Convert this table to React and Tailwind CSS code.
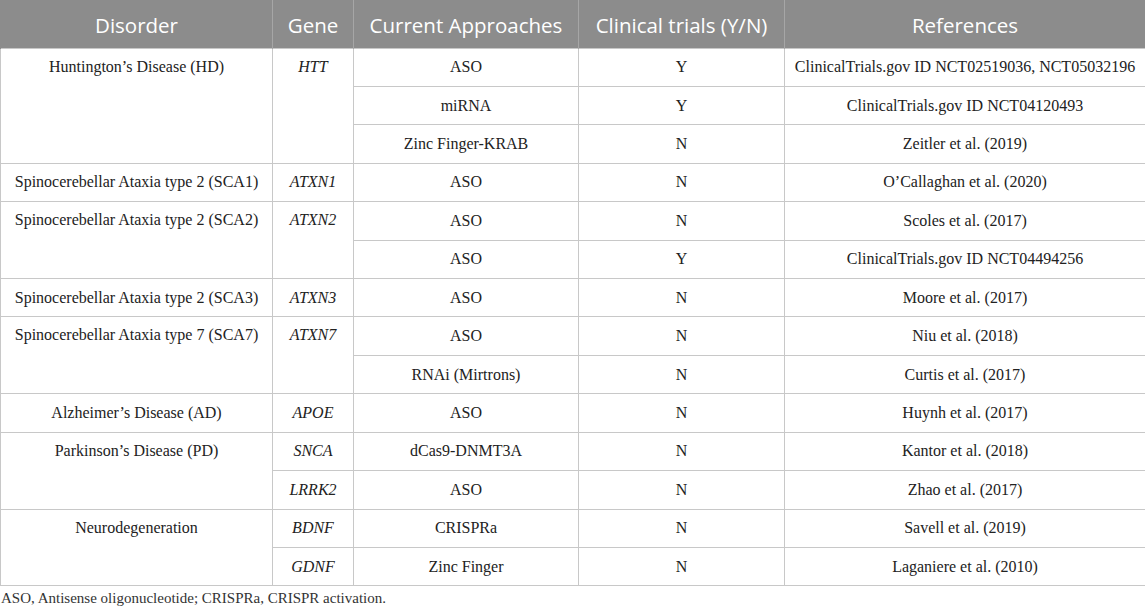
import React from "react";

const serif = { fontFamily: '"Liberation Serif", "Times New Roman", serif' };

const rows = [
  { d: ["Huntington’s Disease (HD)", 3], g: ["HTT", 3], a: "ASO", c: "Y", r: "ClinicalTrials.gov ID NCT02519036, NCT05032196" },
  { a: "miRNA", c: "Y", r: "ClinicalTrials.gov ID NCT04120493" },
  { a: "Zinc Finger-KRAB", c: "N", r: "Zeitler et al. (2019)" },
  { d: ["Spinocerebellar Ataxia type 2 (SCA1)", 1], g: ["ATXN1", 1], a: "ASO", c: "N", r: "O’Callaghan et al. (2020)" },
  { d: ["Spinocerebellar Ataxia type 2 (SCA2)", 2], g: ["ATXN2", 2], a: "ASO", c: "N", r: "Scoles et al. (2017)" },
  { a: "ASO", c: "Y", r: "ClinicalTrials.gov ID NCT04494256" },
  { d: ["Spinocerebellar Ataxia type 2 (SCA3)", 1], g: ["ATXN3", 1], a: "ASO", c: "N", r: "Moore et al. (2017)" },
  { d: ["Spinocerebellar Ataxia type 7 (SCA7)", 2], g: ["ATXN7", 2], a: "ASO", c: "N", r: "Niu et al. (2018)" },
  { a: "RNAi (Mirtrons)", c: "N", r: "Curtis et al. (2017)" },
  { d: ["Alzheimer’s Disease (AD)", 1], g: ["APOE", 1], a: "ASO", c: "N", r: "Huynh et al. (2017)" },
  { d: ["Parkinson’s Disease (PD)", 2], g: ["SNCA", 1], a: "dCas9-DNMT3A", c: "N", r: "Kantor et al. (2018)" },
  { g: ["LRRK2", 1], a: "ASO", c: "N", r: "Zhao et al. (2017)" },
  { d: ["Neurodegeneration", 2], g: ["BDNF", 1], a: "CRISPRa", c: "N", r: "Savell et al. (2019)" },
  { g: ["GDNF", 1], a: "Zinc Finger", c: "N", r: "Laganiere et al. (2010)" },
];

const td = "border border-[#c8c8c8] text-center px-2 leading-[20px]";

export default function App() {
  return (
    <div className="w-[1145px] h-[611px] bg-white overflow-hidden">
      <table className="w-[1145px] border-collapse table-fixed" style={serif}>
        <colgroup>
          <col className="w-[272px]" />
          <col className="w-[81px]" />
          <col className="w-[225px]" />
          <col className="w-[206px]" />
          <col className="w-[361px]" />
        </colgroup>
        <thead>
          <tr
            className="h-[48px] bg-[#8c8c8c] text-white text-[20.5px] font-normal"
            style={{ fontFamily: '"Open Sans", "Noto Sans", sans-serif' }}
          >
            {["Disorder", "Gene", "Current Approaches", "Clinical trials (Y/N)", "References"].map((h) => (
              <th key={h} className="font-normal border-x border-[#a6a6a6] first:border-l-[#8c8c8c] last:border-r-[#8c8c8c] text-center px-1 pt-[3px] whitespace-nowrap">
                {h}
              </th>
            ))}
          </tr>
        </thead>
        <tbody className="text-[16px] text-[#222]">
          {rows.map((row, i) => (
            <tr key={i} className="h-[38.43px]">
              {row.d && (
                <td rowSpan={row.d[1]} className={`${td} ${row.d[1] > 1 ? "align-top pt-[8px]" : "align-middle"}`}>
                  {row.d[0]}
                </td>
              )}
              {row.g && (
                <td rowSpan={row.g[1]} className={`${td} italic ${row.g[1] > 1 ? "align-top pt-[8px]" : "align-middle"}`}>
                  {row.g[0]}
                </td>
              )}
              <td className={td}>{row.a}</td>
              <td className={td}>{row.c}</td>
              <td className={`${td} whitespace-nowrap`}>{row.r}</td>
            </tr>
          ))}
        </tbody>
      </table>
      <div className="pt-[2px] pl-[1px] text-[15px] text-[#333] leading-[20px]" style={serif}>
        ASO, Antisense oligonucleotide; CRISPRa, CRISPR activation.
      </div>
    </div>
  );
}
